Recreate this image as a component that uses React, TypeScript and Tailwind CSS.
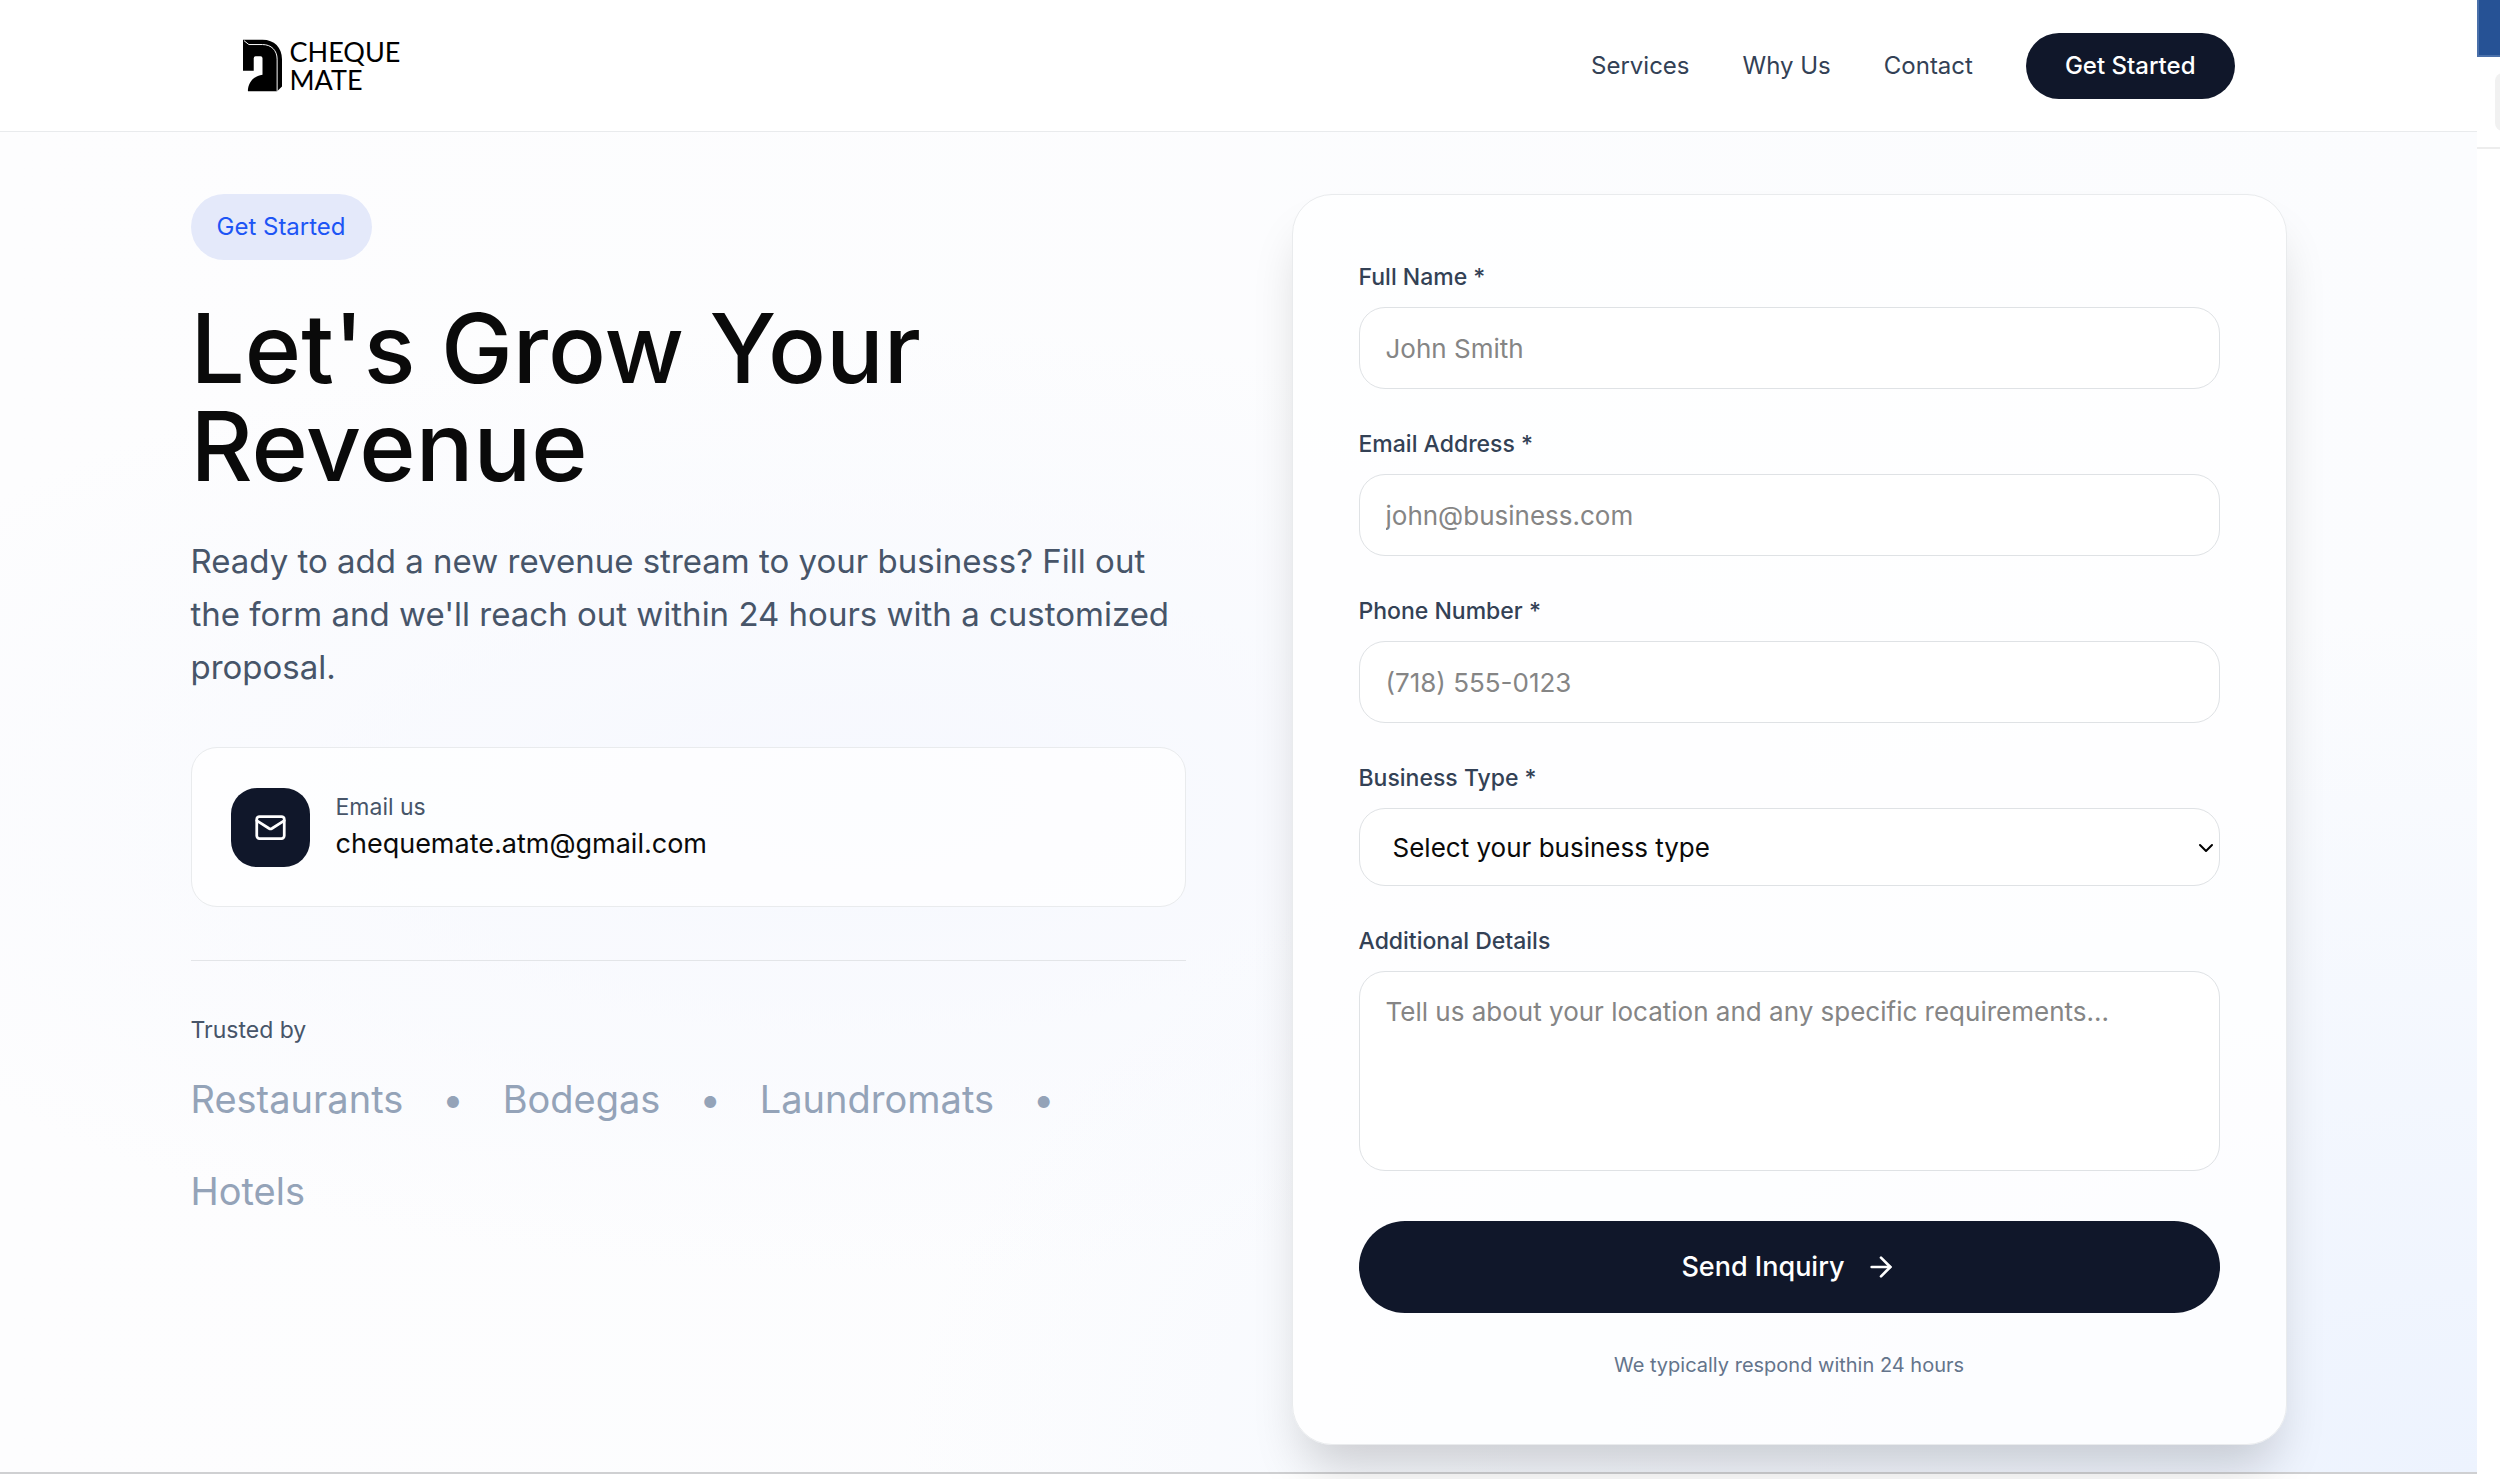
import type { ReactNode } from 'react';
import { ArrowRight, ChevronDown, Mail } from 'lucide-react';

const navLinks = [
  { label: 'Services', href: '#services' },
  { label: 'Why Us', href: '#why-us' },
  { label: 'Contact', href: '#contact' },
];

const trustedBy = ['Restaurants', 'Bodegas', 'Laundromats', 'Hotels'];

const fieldClass =
  'block w-full rounded-[26px] border border-[#dfe2e5] bg-white/70 px-[26px] text-[26px] text-[#0a0a0a] placeholder:text-[#858585] outline-none';

function Logo() {
  return (
    <a href="#top" aria-label="Cheque Mate" className="flex items-center gap-2 text-black">
      <svg viewBox="0 0 40 53" className="h-[53px] w-[39px]" aria-hidden="true">
        <path
          d="M0 0H20C32 0 40 8 40 20V48L35 53H5C5 44 11 37 20 36V19Q20 17 18 17H13Q11 17 11 19V32H0Z"
          fill="currentColor"
        />
        <path d="M1 1L6 5H20C29 5 35 11 35 20V53" fill="none" stroke="white" strokeWidth="1" />
      </svg>
      <span className="flex flex-col font-['Lato',sans-serif] text-[27px] leading-7">
        <span>CHEQUE</span>
        <span>MATE</span>
      </span>
    </a>
  );
}

function Header() {
  return (
    <header className="border-b border-[#e9ebed] bg-white">
      <div className="mx-auto flex h-[131px] max-w-[2096px] items-center justify-between px-[52px]">
        <Logo />
        <nav className="flex items-center gap-[53px] text-[24px] leading-[33px] text-[#334155]">
          {navLinks.map((link) => (
            <a key={link.href} href={link.href}>
              {link.label}
            </a>
          ))}
          <a
            href="#contact"
            className="flex h-[66px] items-center rounded-full bg-[#10172a] px-[39px] font-medium text-white"
          >
            Get Started
          </a>
        </nav>
      </div>
    </header>
  );
}

function Intro() {
  return (
    <div className="flex flex-col">
      <span className="flex h-[66px] items-center self-start rounded-full bg-[#e4e9fa] px-[26px] text-[24px] text-[#1d55f5]">
        Get Started
      </span>
      <h1 className="mt-[39px] text-[96px] leading-[98px] font-medium text-[#0a0a0a]">
        Let's Grow Your Revenue
      </h1>
      <p className="mt-10 text-[33px] leading-[53px] text-[#475569]">
        Ready to add a new revenue stream to your business? Fill out the form and we'll reach out
        within 24 hours with a customized proposal.
      </p>

      {/* Email card */}
      <div className="mt-[53px] flex h-40 items-center gap-[26px] rounded-[26px] border border-[#e9ebed] bg-white/70 px-[39px]">
        <div className="flex size-[79px] items-center justify-center rounded-[26px] bg-[#10172a] text-white">
          <Mail className="size-[33px]" strokeWidth={2} />
        </div>
        <div>
          <div className="text-[23px] leading-[33px] text-[#475569]">Email us</div>
          <a href="mailto:chequemate.atm@gmail.com" className="block text-[27px] leading-10 text-[#0a0a0a]">
            chequemate.atm@gmail.com
          </a>
        </div>
      </div>

      {/* Trusted by */}
      <div className="mt-[53px] border-t border-[#e3e5e8] pt-[53px]">
        <p className="text-[23px] leading-[33px] text-[#475569]">Trusted by</p>
        <div className="mt-[26px] flex flex-wrap items-center gap-[39px] text-[38px] leading-[53px] text-[#94a3b8]">
          {trustedBy.map((name, i) => [
            <span key={name}>{name}</span>,
            i < trustedBy.length - 1 && <span key={`${name}-dot`}>•</span>,
          ])}
        </div>
      </div>
    </div>
  );
}

function Field({ id, label, children }: { id: string; label: string; children: ReactNode }) {
  return (
    <div>
      <label htmlFor={id} className="mb-[13px] block text-[23px] leading-[33px] font-medium text-[#334155]">
        {label}
      </label>
      {children}
    </div>
  );
}

function InquiryForm() {
  return (
    <form
      className="flex flex-col gap-[39px] rounded-[40px] border border-[#e9ebed] bg-white/80 p-[66px] shadow-[0_33px_50px_-12px_rgba(0,0,0,0.18)]"
      onSubmit={(e) => e.preventDefault()}
    >
      <Field id="name" label="Full Name *">
        <input id="name" type="text" placeholder="John Smith" className={`${fieldClass} h-[82px]`} />
      </Field>
      <Field id="email" label="Email Address *">
        <input id="email" type="email" placeholder="john@business.com" className={`${fieldClass} h-[82px]`} />
      </Field>
      <Field id="phone" label="Phone Number *">
        <input id="phone" type="tel" placeholder="(718) 555-0123" className={`${fieldClass} h-[82px]`} />
      </Field>
      <Field id="business" label="Business Type *">
        <div className="relative">
          <select id="business" defaultValue="" className={`${fieldClass} h-[78px] appearance-none pl-[33px]`}>
            <option value="">Select your business type</option>
            <option value="restaurant">Restaurant</option>
            <option value="bodega">Bodega</option>
            <option value="laundromat">Laundromat</option>
            <option value="hotel">Hotel</option>
          </select>
          <ChevronDown className="pointer-events-none absolute top-7 right-0.5 size-6 text-black" strokeWidth={2} />
        </div>
      </Field>
      <Field id="details" label="Additional Details">
        <textarea
          id="details"
          placeholder="Tell us about your location and any specific requirements..."
          className={`${fieldClass} h-[200px] resize-none py-5 leading-10`}
        />
      </Field>
      <button
        type="submit"
        className="mt-[11px] flex h-[92px] items-center justify-center gap-5 rounded-full bg-[#10172a] text-[27px] font-medium text-white"
      >
        Send Inquiry
        <ArrowRight className="size-8" strokeWidth={2} />
      </button>
      <p className="text-center text-[20px] leading-[26px] text-[#64748b]">
        We typically respond within 24 hours
      </p>
    </form>
  );
}

export default function App() {
  return (
    <div id="top" className="flex min-h-screen bg-white font-['Inter',sans-serif]">
      <div className="flex-1 border-b-4 border-white">
        <div className="border-b-2 border-[#cfd0d2]">
          <Header />
          <main className="bg-[radial-gradient(ellipse_at_100%_100%,#edf3fe_0%,transparent_45%),radial-gradient(ellipse_at_35%_50%,#f6f8fe_0%,transparent_50%),linear-gradient(to_right,#fdfdfe,#fbfcfe)]">
            <div className="mx-auto grid max-w-[2096px] grid-cols-2 gap-[106px] pt-[62px] pb-[27px]">
              <Intro />
              <InquiryForm />
            </div>
          </main>
        </div>
      </div>

      {/* Edge of the neighbouring panel */}
      <aside className="w-[23px] overflow-hidden bg-white">
        <div className="h-[57px] border-b-2 border-l-2 border-[#4a70aa] bg-[#265295]" />
        <div className="h-[92px] border-b-2 border-[#ededed] pt-4 pl-[18px]">
          <div className="h-[58px] w-20 rounded-lg bg-[#f1f1f1]" />
        </div>
      </aside>
    </div>
  );
}
